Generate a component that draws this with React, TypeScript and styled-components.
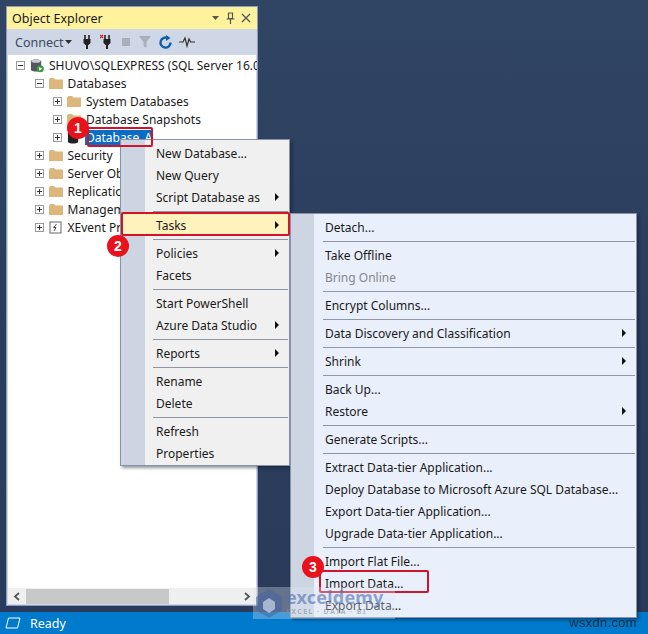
import React from "react";
import styled, { createGlobalStyle } from "styled-components";

const Global = createGlobalStyle`
  html, body { margin: 0; padding: 0; }
  body { width: 648px; height: 634px; overflow: hidden; font-family: "Noto Sans", "Open Sans", sans-serif; font-size: 12px; color: #1a1a1a; }
  * { box-sizing: border-box; }
`;

const Page = styled.div`
  position: relative; width: 648px; height: 634px; display: flex; flex-direction: column; overflow: hidden;
  background: linear-gradient(180deg, #304463 0%, #2c3e5e 50%, #2a3a5a 100%);
`;
const Main = styled.div`flex: 1; padding: 6px 390px 6px 6px; min-height: 0;`;
const Panel = styled.section`
  height: 100%; display: flex; flex-direction: column; border: 1px solid #8e9bbc; background: #fff;
  box-shadow: inset 0 0 0 1px #cfd6e5;
`;
const TitleBar = styled.header`
  height: 22px; flex: none; background: #fff29d; display: flex; align-items: center; padding: 0 6px 0 5px; font-size: 12.5px; justify-content: space-between;
`;
const TitleTools = styled.div`display: flex; align-items: center; gap: 6px; color: #5c5c44;`;
const Toolbar = styled.div`
  height: 26px; flex: none; background: #cfd6e5; display: flex; align-items: center; padding: 0 0 0 8px; color: #3b4a5e; font-size: 12.5px;
`;
const ConnectLabel = styled.span`margin-right: 2px;`;
const ToolIcons = styled.div`display: flex; align-items: center; gap: 6px; margin-left: 8px;`;
const Tree = styled.ul`
  list-style: none; flex: 1; margin: 0; padding: 1px 0 0 0; min-height: 0; overflow: hidden; white-space: nowrap;
`;
const Row = styled.li<{ $level: number }>`
  height: 18px; display: flex; align-items: center; padding-left: ${p => 9 + p.$level * 18.5}px; gap: 4px;
`;
const Expander = styled.span`
  width: 9px; height: 9px; border: 1px solid #9a9a9a; flex: none; position: relative; margin-right: 1px;
  &::before { content: ""; position: absolute; left: 1px; right: 1px; top: 3px; height: 1px; background: #333; }
`;
const ExpanderPlus = styled(Expander)`
  &::after { content: ""; position: absolute; top: 1px; bottom: 1px; left: 3px; width: 1px; background: #333; }
`;
const RowIcon = styled.span`width: 14px; height: 14px; flex: none; display: flex; align-items: center; justify-content: center;`;
const RowText = styled.span<{ $selected?: boolean }>`
  padding: 0 1px; line-height: 15px;
  ${p => p.$selected ? "background:#0a6cc4;color:#fff;" : ""}
`;
const HScroll = styled.div`
  height: 16px; flex: none; background: #efefef; display: flex; align-items: center; margin: 0 1px 1px; color: #555;
`;
const ScrollArrow = styled.span`width: 18px; flex: none; display: flex; justify-content: center;`;
const Thumb = styled.div`width: 143px; height: 15px; background: #c8c8c8; flex: none;`;
const ScrollSpacer = styled.div`flex: 1;`;
const StatusBar = styled.footer`
  height: 22px; flex: none; background: #007acc; color: #fff; display: flex; align-items: center; padding-left: 5px; gap: 9px; font-size: 12.5px; position: relative;
`;
const Credit = styled.span`position: absolute; right: 11px; top: 3px; color: #1c2f45; font-family: "Liberation Sans", sans-serif; font-size: 13px; letter-spacing: .3px;`;

const Menu = styled.div<{ $left: number; $top: number; $width: number; $bg: string; $gutter: number }>`
  position: absolute; left: ${p => p.$left}px; top: ${p => p.$top}px; width: ${p => p.$width}px;
  padding: 2px 1px 1px; border: 1px solid #8a93a6;
  background: linear-gradient(90deg, #cdd5e3 ${p => p.$gutter}px, ${p => p.$bg} ${p => p.$gutter}px);
  box-shadow: 2px 2px 3px rgba(10,20,40,.45);
`;
const Item = styled.div<{ $hot?: boolean; $disabled?: boolean; $inset: number }>`
  height: 22px; display: flex; align-items: center; justify-content: space-between; padding: 0 9px 0 ${p => p.$inset}px;
  ${p => p.$hot ? "background:#fff2bd;" : ""}
  ${p => p.$disabled ? "color:#85888e;" : ""}
`;
const Arrow = styled.span`width: 0; height: 0; border-left: 4px solid #111; border-top: 4px solid transparent; border-bottom: 4px solid transparent;`;
const Sep = styled.div<{ $inset: number }>`height: 6px; margin-left: ${p => p.$inset}px; display: flex; align-items: center; &::after { content: ""; flex: 1; height: 1px; background: #8f95a3; }`;

const Badge = styled.span<{ $x: number; $y: number }>`
  position: absolute; left: ${p => p.$x}px; top: ${p => p.$y}px; width: 22px; height: 22px; border-radius: 50%;
  background: #e8111c; color: #fff; font: 700 14px "Liberation Sans", sans-serif; display: flex; align-items: center; justify-content: center;
`;
const Mark = styled.div<{ $x: number; $y: number; $w: number; $h: number }>`
  position: absolute; left: ${p => p.$x}px; top: ${p => p.$y}px; width: ${p => p.$w}px; height: ${p => p.$h}px;
  border: 2px solid #d0142a; border-radius: 2px;
`;
const Watermark = styled.div`
  position: absolute; left: 253px; top: 587px; width: 142px; height: 32px; background: rgba(225,232,245,.32); display: flex; align-items: flex-start; padding: 1px 0 0 1px; gap: 2px; pointer-events: none;
`;
const WmText = styled.div`display: flex; flex-direction: column; line-height: 1;`;
const WmTitle = styled.span`color: rgba(80,110,170,.6); font: 700 18px "Noto Sans", sans-serif; line-height: 19px; letter-spacing: .2px;`;
const WmSub = styled.span`color: rgba(130,140,150,.6); font: 700 7px "Noto Sans", sans-serif; letter-spacing: 1.4px;`;

const Folder = () => (
  <svg width="14" height="13" viewBox="0 0 14 13"><path d="M0 2.5 L1.5 1 H5 L6.5 2.5 H14 V12 H0Z" fill="#dcb67a" /></svg>
);
const Plus = () => <ExpanderPlus />;

const Chevron = ({ left }: { left?: boolean }) => (
  <svg width="8" height="9" viewBox="0 0 8 9"><path d={left ? "M6 1 L2 4.5 L6 8" : "M2 1 L6 4.5 L2 8"} fill="none" stroke="#555" strokeWidth="1.8" /></svg>
);

const Db = ({ dark, badge }: { dark?: boolean; badge?: boolean }) => (
  <svg width="15" height="15" viewBox="0 0 15 15">
    <path d="M1 3 C1 0.5 12 0.5 12 3 V12 C12 14.5 1 14.5 1 12Z" fill={dark ? "#222" : "#54585e"} />
    <ellipse cx="6.5" cy="3" rx="5" ry="1.6" fill={dark ? "#3a3a3a" : "#c9ccd0"} />
    {badge && <><circle cx="11" cy="11" r="3.8" fill="#3a9a3f" /><path d="M9.8 9 L13 11 L9.8 13Z" fill="#fff" /></>}
  </svg>
);

const Plug = ({ x }: { x?: boolean }) => (
  <svg width="14" height="16" viewBox="0 0 14 16">
    {x && <path d="M0 1 L3 4 M3 1 L0 4" stroke="#d0201c" strokeWidth="1.2" />}
    <path d="M5 1 V5 M9 1 V5" stroke="#222" strokeWidth="1.6" />
    <path d="M3.5 5 H10.5 V9 L8.5 11 H5.5 L3.5 9Z" fill="#222" />
    <path d="M7 11 V15" stroke="#222" strokeWidth="2" />
  </svg>
);

const items1: (string | [string, boolean?])[] = [];
void items1;

type Entry = { t?: string; sub?: boolean; hot?: boolean; off?: boolean };
const m1: Entry[] = [
  { t: "New Database..." }, { t: "New Query" }, { t: "Script Database as", sub: true }, {},
  { t: "Tasks", sub: true, hot: true }, {},
  { t: "Policies", sub: true }, { t: "Facets" }, {},
  { t: "Start PowerShell" }, { t: "Azure Data Studio", sub: true }, {},
  { t: "Reports", sub: true }, {},
  { t: "Rename" }, { t: "Delete" }, {},
  { t: "Refresh" }, { t: "Properties" },
];
const m2: Entry[] = [
  { t: "Detach..." }, {},
  { t: "Take Offline" }, { t: "Bring Online", off: true }, {},
  { t: "Encrypt Columns..." }, {},
  { t: "Data Discovery and Classification", sub: true }, {},
  { t: "Shrink", sub: true }, {},
  { t: "Back Up..." }, { t: "Restore", sub: true }, {},
  { t: "Generate Scripts..." }, {},
  { t: "Extract Data-tier Application..." }, { t: "Deploy Database to Microsoft Azure SQL Database..." },
  { t: "Export Data-tier Application..." }, { t: "Upgrade Data-tier Application..." }, {},
  { t: "Import Flat File..." }, { t: "Import Data..." }, { t: "Export Data..." },
];

const MenuList = ({ entries, left, top, width, bg, gutter, inset, sepInset }: { entries: Entry[]; left: number; top: number; width: number; bg: string; gutter: number; inset: number; sepInset: number }) => (
  <Menu $left={left} $top={top} $width={width} $bg={bg} $gutter={gutter}>
    {entries.map((e, i) => e.t ? (
      <Item key={i} $inset={inset} $hot={e.hot} $disabled={e.off}><span>{e.t}</span>{e.sub && <Arrow />}</Item>
    ) : <Sep key={i} $inset={sepInset} />)}
  </Menu>
);

const rows: { level: number; open?: boolean; icon: React.ReactNode; text: string; selected?: boolean }[] = [
  { level: 0, open: true, icon: <Db badge />, text: "SHUVO\\SQLEXPRESS (SQL Server 16.0.1" },
  { level: 1, open: true, icon: <Folder />, text: "Databases" },
  { level: 2, icon: <Folder />, text: "System Databases" },
  { level: 2, icon: <Folder />, text: "Database Snapshots" },
  { level: 2, icon: <Db dark />, text: "Database_A", selected: true },
  { level: 1, icon: <Folder />, text: "Security" },
  { level: 1, icon: <Folder />, text: "Server Objects" },
  { level: 1, icon: <Folder />, text: "Replication" },
  { level: 1, icon: <Folder />, text: "Management" },
  { level: 1, icon: <svg width="13" height="13" viewBox="0 0 13 13"><rect x="1" y="1" width="11" height="11" fill="#fff" stroke="#666" /><path d="M7.5 3 L4.5 6.5 H7 L5 10" fill="none" stroke="#444" /></svg>, text: "XEvent Profiler" },
];

export default function App() {
  return (
    <Page>
      <Global />
      <Main>
        <Panel>
          <TitleBar>
            <span>Object Explorer</span>
            <TitleTools>
              <svg width="9" height="6" viewBox="0 0 9 6"><path d="M1 1 H8 L4.5 5Z" fill="#555" /></svg>
              <svg width="9" height="12" viewBox="0 0 9 12"><path d="M2.5 1 H6.5 V6.5 H2.5Z M0.5 7 H8.5 M4.5 7 V12" fill="none" stroke="#555" strokeWidth="1.2" /></svg>
              <svg width="10" height="10" viewBox="0 0 10 10"><path d="M1 1 L9 9 M9 1 L1 9" stroke="#555" strokeWidth="1.3" /></svg>
            </TitleTools>
          </TitleBar>
          <Toolbar>
            <ConnectLabel>Connect</ConnectLabel>
            <svg width="7" height="4" viewBox="0 0 7 4"><path d="M0 0 H7 L3.5 4Z" fill="#333" /></svg>
            <ToolIcons>
              <Plug />
              <Plug x />
              <svg width="12" height="12" viewBox="0 0 12 12"><rect x="2" y="2" width="8" height="8" fill="#a8afbb" /></svg>
              <svg width="14" height="14" viewBox="0 0 14 14"><path d="M1 1 H13 L8.5 7 V13 L5.5 11 V7Z" fill="#a8afbb" /></svg>
              <svg width="15" height="15" viewBox="0 0 15 15"><path d="M12.5 7.5 A5 5 0 1 1 9.5 3" fill="none" stroke="#0f5fa8" strokeWidth="2.4" /><path d="M8 0 L12.5 3 L8 6Z" fill="#0f5fa8" /></svg>
              <svg width="16" height="12" viewBox="0 0 16 12"><path d="M0 6 H4 L6 2 L8 10 L10 3 L11.5 6 H16" fill="none" stroke="#333" strokeWidth="1.2" /></svg>
            </ToolIcons>
          </Toolbar>
          <Tree>
            {rows.map((r, i) => (
              <Row key={i} $level={r.level}>
                {r.open ? <Expander /> : <Plus />}
                <RowIcon>{r.icon}</RowIcon>
                <RowText $selected={r.selected}>{r.text}</RowText>
              </Row>
            ))}
          </Tree>
          <HScroll>
            <ScrollArrow><Chevron left /></ScrollArrow>
            <Thumb />
            <ScrollSpacer />
            <ScrollArrow><Chevron /></ScrollArrow>
          </HScroll>
        </Panel>
      </Main>
      <StatusBar>
        <svg width="16" height="12" viewBox="0 0 16 12"><path d="M3.5 1 H15 L12.5 11 H1Z" fill="none" stroke="#fff" strokeWidth="1" /></svg>
        <span>Ready</span>
        <Credit>wsxdn.com</Credit>
      </StatusBar>

      <MenuList entries={m1} left={120} top={139} width={170} bg="#f0f0f0" gutter={24} inset={34} sepInset={31} />
      <MenuList entries={m2} left={290} top={213} width={347} bg="#e9effb" gutter={23} inset={33} sepInset={31} />

      <Mark $x={87} $y={127} $w={66} $h={20} />
      <Mark $x={121} $y={212} $w={169} $h={24} />
      <Mark $x={319} $y={570} $w={110} $h={23} />
      <Badge $x={67} $y={117}>1</Badge>
      <Badge $x={107} $y={235}>2</Badge>
      <Badge $x={302} $y={556}>3</Badge>
      <Watermark>
        <svg width="30" height="30" viewBox="0 0 30 30"><path d="M15 1 L28 9 V22 L15 30 L2 22 V9Z" fill="rgba(70,100,160,.55)" /><path d="M15 10 L21 14 V21 L15 25 L9 21 V14Z" fill="rgba(225,232,245,.6)" /></svg>
        <WmText>
          <WmTitle>exceldemy</WmTitle>
          <WmSub>EXCEL · DATA · BI</WmSub>
        </WmText>
      </Watermark>
    </Page>
  );
}
